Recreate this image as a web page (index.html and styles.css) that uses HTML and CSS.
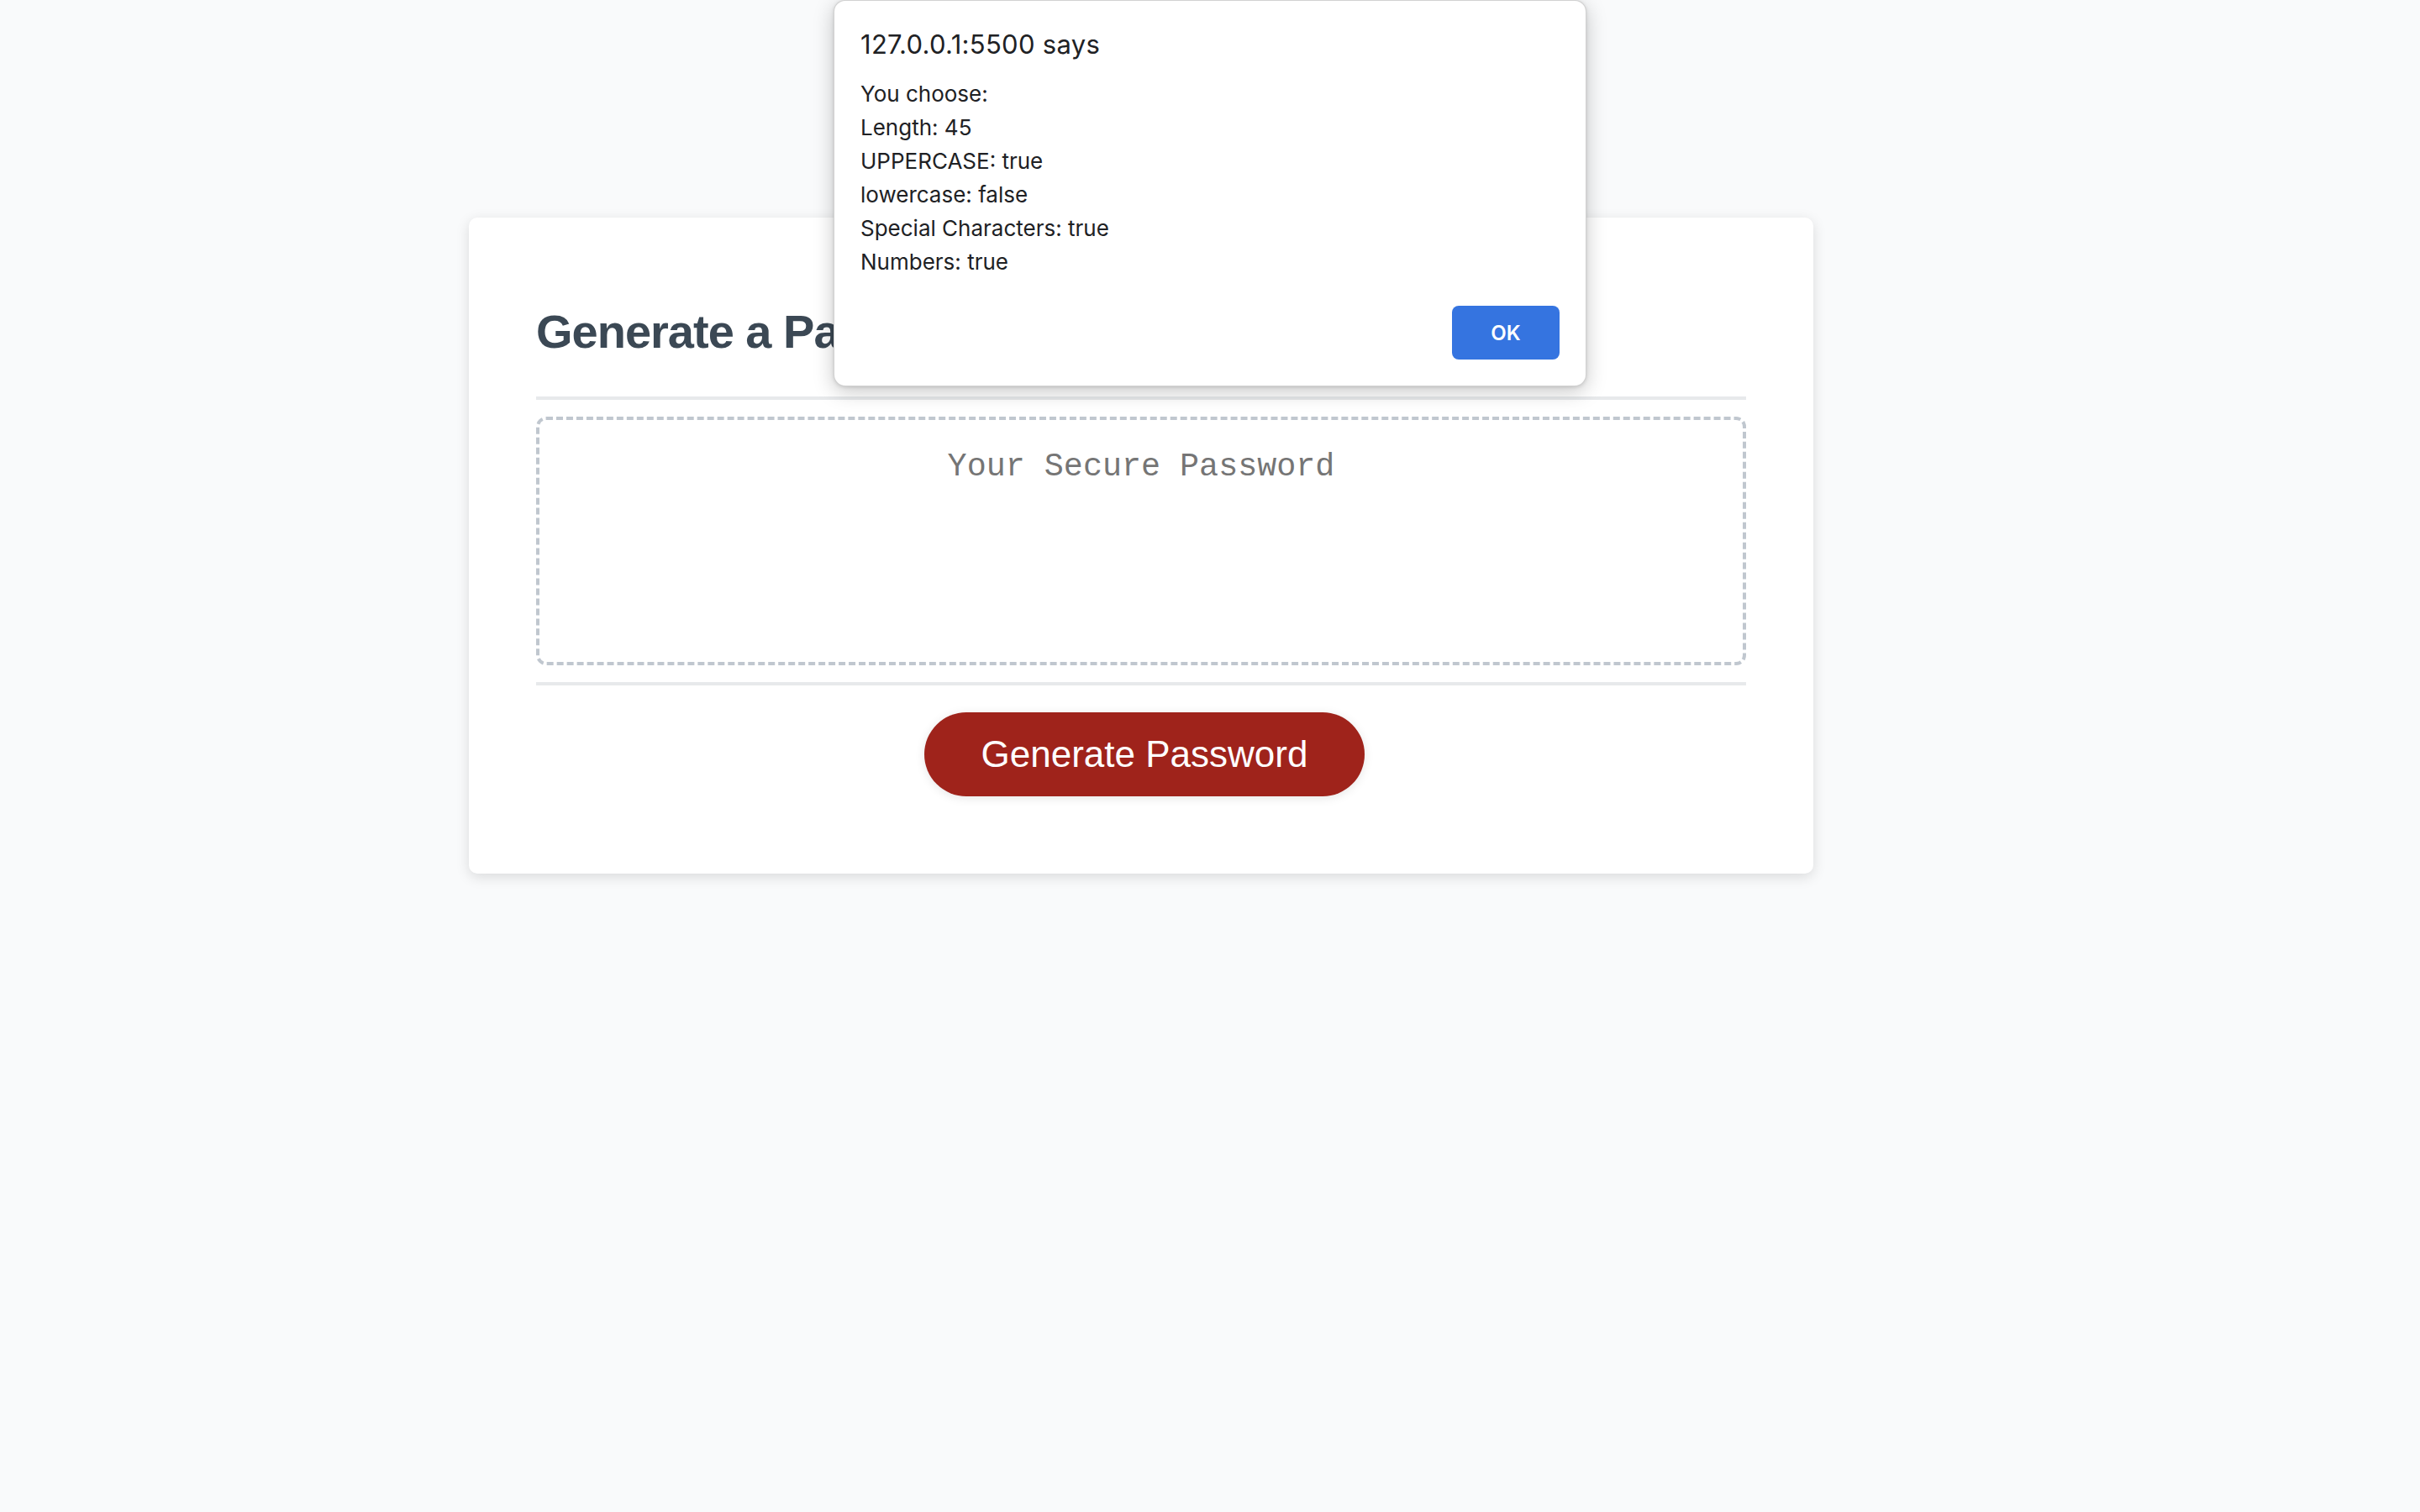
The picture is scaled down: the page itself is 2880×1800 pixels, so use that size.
FILE: index.html
```html
<!DOCTYPE html>
<html lang="en">
<head>
<meta charset="UTF-8">
<title>Password Generator</title>
<link rel="stylesheet" href="styles.css">
</head>
<body>
<div class="wrapper">
  <div class="card">
    <div class="card-header">
      <h2>Generate a Password</h2>
    </div>
    <div class="card-body">
      <textarea readonly id="password" class="password" placeholder="Your Secure Password" aria-label="Generated Password"></textarea>
    </div>
    <div class="card-footer">
      <button id="generate" class="btn">Generate Password</button>
    </div>
  </div>
</div>

<div class="alert" role="alertdialog">
  <div class="alert-title">127.0.0.1:5500 says</div>
  <div class="alert-message">
    <div class="alert-line">You choose:</div>
    <div class="alert-line">Length: 45</div>
    <div class="alert-line">UPPERCASE: true</div>
    <div class="alert-line">lowercase: false</div>
    <div class="alert-line">Special Characters: true</div>
    <div class="alert-line">Numbers: true</div>
  </div>
  <div class="alert-actions">
    <button class="alert-ok">OK</button>
  </div>
</div>
</body>
</html>
```

FILE: styles.css
```css
*, *::before, *::after {
  box-sizing: border-box;
}

html, body {
  margin: 0;
  padding: 0;
  height: 100%;
}

body {
  font-family: "Liberation Sans", Arial, Helvetica, sans-serif;
  background-color: #f9fafb;
  color: #3b4854;
}

.wrapper {
  padding: 259px 204px 0 40px;
}

.card {
  background-color: #ffffff;
  border-radius: 10px;
  box-shadow: rgba(0, 0, 0, 0.13) 0 4px 16px 0;
  max-width: 1600px;
  margin: 0 auto;
  padding: 60px 80px;
}

.card-header h2 {
  font-size: 56px;
  line-height: 62px;
  font-weight: bold;
  letter-spacing: -1px;
  margin: 45px 0 46px;
  color: #3b4854;
}

.card-header::after,
.card-footer::before {
  content: "";
  display: block;
  width: 100%;
  height: 4px;
  background: #e7e9eb;
}

.password {
  display: block;
  width: 100%;
  height: 296px;
  margin: 20px 0;
  padding: 34px 30px 166px;
  border: 4px dashed #c0c7cf;
  border-radius: 12px;
  font-family: "Liberation Mono", "Courier New", monospace;
  font-size: 38.4px;
  text-align: center;
  resize: none;
  overflow: hidden;
  background: #ffffff;
  outline: none;
}

.password::placeholder {
  color: #757575;
}

.card-footer {
  text-align: center;
}

.btn {
  display: inline-block;
  border: none;
  background-color: #9f231b;
  border-radius: 50px;
  color: #ffffff;
  font-family: "Liberation Sans", Arial, Helvetica, sans-serif;
  font-size: 44px;
  line-height: 44px;
  margin: 32px 32px 32px 40px;
  padding: 28px 68px;
  box-shadow: rgba(0, 0, 0, 0.1) 0 2px 12px 0;
  cursor: pointer;
}

/* native-style alert dialog overlay */
.alert {
  position: absolute;
  top: 0;
  left: 992px;
  width: 896px;
  height: 460px;
  background: #ffffff;
  border: 1px solid rgba(0, 0, 0, 0.18);
  border-radius: 14px;
  box-shadow: 0 6px 24px rgba(0, 0, 0, 0.22), 0 1px 4px rgba(0, 0, 0, 0.12);
  padding: 34px 31px 31px 31px;
  font-family: Inter, "Noto Sans", sans-serif;
  color: #202124;
}

.alert-title {
  font-size: 31px;
  line-height: 36px;
  letter-spacing: 0.3px;
  margin-bottom: 21px;
}

.alert-line {
  font-size: 26px;
  line-height: 40px;
}

.alert-actions {
  display: flex;
  justify-content: flex-end;
  margin-top: 32px;
}

.alert-ok {
  width: 128px;
  height: 64px;
  border: none;
  border-radius: 8px;
  background: #3574e0;
  color: #ffffff;
  font-family: Inter, "Noto Sans", sans-serif;
  font-size: 24px;
  font-weight: 600;
}
```
